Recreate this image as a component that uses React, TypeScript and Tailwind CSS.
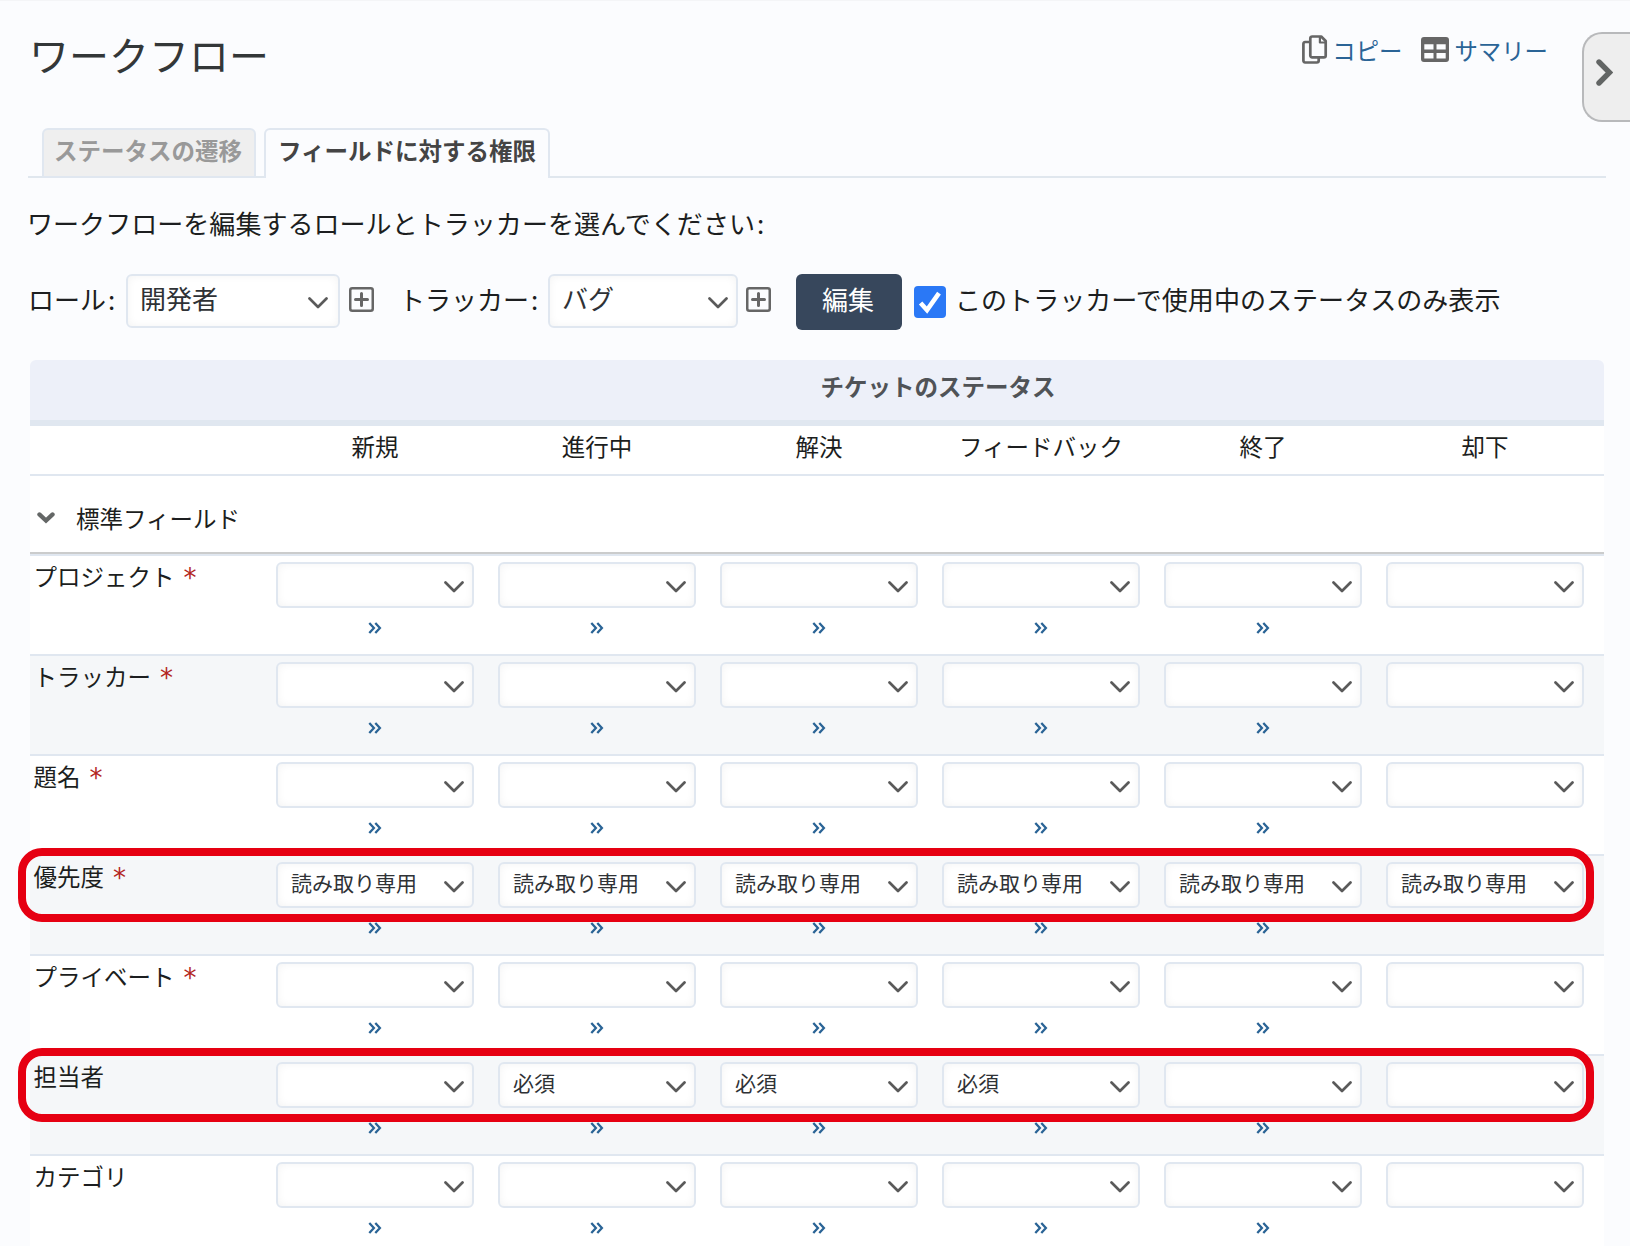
import React from "react";

const statuses = ["新規", "進行中", "解決", "フィードバック", "終了", "却下"];

const READ_ONLY = "読み取り専用";
const REQUIRED = "必須";

type Field = { name: string; required?: boolean; values?: string[]; highlight?: boolean };

const fields: Field[] = [
  { name: "プロジェクト", required: true },
  { name: "トラッカー", required: true },
  { name: "題名", required: true },
  { name: "優先度", required: true, values: Array(6).fill(READ_ONLY), highlight: true },
  { name: "プライベート", required: true },
  { name: "担当者", values: ["", REQUIRED, REQUIRED, REQUIRED, "", ""], highlight: true },
  { name: "カテゴリ" },
];

function Caret() {
  return (
    <svg width="20" height="12" viewBox="0 0 20 12" fill="none" className="mt-[3px] shrink-0">
      <path d="M1.5 1.5 10 10 18.5 1.5" stroke="#5a5a5a" strokeWidth="2.7" strokeLinecap="round" strokeLinejoin="round" />
    </svg>
  );
}

function PlusBox() {
  return (
    <svg width="25" height="25" viewBox="0 0 25 25" fill="none" stroke="#666" className="shrink-0">
      <rect x="1.25" y="1.25" width="22.5" height="22.5" rx="2" strokeWidth="2.5" />
      <path d="M12.5 6.5v12M6.5 12.5h12" strokeWidth="3" strokeLinecap="round" />
    </svg>
  );
}

function CopyIcon() {
  return (
    <svg width="26" height="30" viewBox="0 0 26 30" fill="none" stroke="#666" strokeWidth="2.7" strokeLinejoin="round" className="shrink-0">
      <path d="M8.2 7H3.2A1.9 1.9 0 0 0 1.4 8.9V25.6A1.9 1.9 0 0 0 3.2 27.5H14.8A1.9 1.9 0 0 0 16.7 25.6V23" />
      <path d="M10.2 1.5H19.2L23.7 6V20.4A1.9 1.9 0 0 1 21.8 22.3H10.2A1.9 1.9 0 0 1 8.3 20.4V3.4A1.9 1.9 0 0 1 10.2 1.5Z" />
      <path d="M17.9 2V7.5H23.6" strokeWidth="2.2" />
    </svg>
  );
}

function TableIcon() {
  return (
    <svg width="28" height="25" viewBox="0 0 28 25" className="shrink-0">
      <path
        fill="#666"
        fillRule="evenodd"
        d="M3 0H25A3 3 0 0 1 28 3V22A3 3 0 0 1 25 25H3A3 3 0 0 1 0 22V3A3 3 0 0 1 3 0ZM3.3 7.2V12.6H12.5V7.2ZM15.5 7.2V12.6H24.7V7.2ZM3.3 16V21.6H12.5V16ZM15.5 16V21.6H24.7V16Z"
      />
    </svg>
  );
}

function SelectBox({ value = "", className = "" }: { value?: string; className?: string }) {
  return (
    <div
      className={
        "flex items-center justify-between rounded-[6px] border-2 border-[#e0e7f0] bg-white text-[#2f3236] shadow-[inset_0_0_8px_rgba(0,0,0,0.05)] " +
        className
      }
    >
      <span className="-mt-1.5 whitespace-nowrap">{value}</span>
      <Caret />
    </div>
  );
}

function FieldRow({ field, index, last }: { field: Field; index: number; last: boolean }) {
  const shade = index % 2 === 1 ? "bg-[#f5f7f9]" : "bg-white";
  return (
    <div
      className={
        "relative grid h-[100px] shrink-0 grid-cols-[234px_repeat(6,222px)] " +
        shade +
        (last ? "" : " border-b-2 border-[#e0e7f0]")
      }
    >
      <div className="flex pl-[3.5px] pt-[3px] text-[23.5px] leading-[34px]">
        {field.name}
        {field.required && (
          <span className="ml-[9px] mt-0.5 font-['DejaVu_Sans',sans-serif] text-[26px] text-[#b3261e]">*</span>
        )}
      </div>
      {statuses.map((s, i) => (
        <div key={s} className="flex flex-col items-center pt-1.5">
          <SelectBox value={field.values?.[i]} className="h-[46px] w-[198px] pl-[13px] pr-2 text-[21px] leading-[30px]" />
          {i < 5 && (
            <svg width="14" height="12" viewBox="0 0 14 12" fill="none" stroke="#2a6496" strokeWidth="2.3" className="mt-[14px]">
              <path d="M1.3 1 5.9 6 1.3 11M7.3 1 11.9 6 7.3 11" />
            </svg>
          )}
        </div>
      ))}
      {field.highlight && (
        <div className="absolute left-[-12px] top-[-8px] z-10 h-[74px] w-[1576px] rounded-[24px] border-8 border-[#e60012]" />
      )}
    </div>
  );
}

export default function App() {
  return (
    <div className="flex h-[1246px] w-[1630px] flex-col overflow-hidden border-t border-[#f4f5f7] bg-[#fbfcfe] font-['Noto_Sans_CJK_JP',sans-serif] text-[#1c1e20]">
      <header className="flex h-[127px] shrink-0 justify-between pl-[29px]">
        <h1 className="mt-[24px] text-[40px] leading-[58px] text-[#333738]">ワークフロー</h1>
        <div className="flex items-start">
          <nav className="mr-[34px] mt-[31px] flex items-center text-[23.4px] leading-[36px] text-[#2a6496]">
            <CopyIcon />
            <a className="ml-1">コピー</a>
            <span className="-mt-0.5 ml-[19px] flex items-center">
              <TableIcon />
            </span>
            <a className="ml-[5px]">サマリー</a>
          </nav>
          <button className="mt-[31px] flex h-[90px] w-[48px] items-center rounded-l-[20px] border-2 border-r-0 border-[#b8b9bb] bg-[#eee] pl-3 pb-2.5">
            <svg width="17" height="27" viewBox="0 0 17 27" fill="none">
              <path d="M3 3 13.5 13.5 3 24" stroke="#626564" strokeWidth="5.4" strokeLinecap="round" strokeLinejoin="miter" />
            </svg>
          </button>
        </div>
      </header>

      <div className="ml-7 flex h-[50px] w-[1578px] shrink-0 text-[23.5px] font-bold leading-[34px]">
        <div className="w-[14px] border-b-2 border-[#e0e7ee]" />
        <div className="h-[50px] w-[214px] whitespace-nowrap rounded-t-[6px] border-2 border-[#e0e7f0] bg-[#efefef] pl-[10px] pt-[3px] text-[#999]">
          ステータスの遷移
        </div>
        <div className="w-2 border-b-2 border-[#e0e7ee]" />
        <div className="h-[50px] w-[286px] whitespace-nowrap rounded-t-[6px] border-2 border-b-0 border-[#e0e7f0] pl-[12px] pt-[3px] text-[#444]">
          フィールドに対する権限
        </div>
        <div className="flex-1 border-b-2 border-[#e0e7ee]" />
      </div>

      <p className="ml-[27px] mt-[26px] shrink-0 text-[26.05px] leading-[38px]">
        ワークフローを編集するロールとトラッカーを選んでください<span className="ml-0.5">:</span>
      </p>

      <div className="ml-7 mt-8 flex h-[56px] shrink-0 items-start whitespace-nowrap text-[26px] leading-[50px]">
        <span className="w-[98px]">
          ロール<span className="ml-0.5">:</span>
        </span>
        <SelectBox value="開発者" className="h-[54px] w-[214px] pl-3 pr-2.5 leading-[50px]" />
        <span className="ml-[9px] mt-[13px]">
          <PlusBox />
        </span>
        <span className="ml-[25px] w-[149px]">
          トラッカー<span className="ml-0.5">:</span>
        </span>
        <SelectBox value="バグ" className="h-[54px] w-[190px] pl-3 pr-2 leading-[50px]" />
        <span className="ml-2 mt-[13px]">
          <PlusBox />
        </span>
        <button className="ml-[25px] h-[56px] w-[106px] rounded-[6px] bg-[#37475c] pb-[7px] pr-0.5 leading-[49px] text-white">編集</button>
        <span className="ml-3 mt-3 flex h-8 w-8 items-center justify-center rounded-[4px] bg-[#2a78f6]">
          <svg width="24" height="24" viewBox="0 0 24 24" fill="none">
            <path d="M2.6 13 9 20 21 3.2" stroke="#fff" strokeWidth="4.6" />
          </svg>
        </span>
        <label className="ml-[9px] text-[26.05px]">このトラッカーで使用中のステータスのみ表示</label>
      </div>

      <section className="ml-[30px] mt-[30px] flex w-[1574px] shrink-0 flex-col">
        <div className="flex h-[66px] rounded-t-[6px] border-b-[6px] border-[#e0e7f0] bg-[#edf0f9]">
          <div className="w-[242px]" />
          <div className="flex-1 text-center text-[23.5px] font-bold leading-[53px] text-[#505357]">チケットのステータス</div>
        </div>
        <div className="grid h-[50px] grid-cols-[234px_repeat(6,222px)] border-b-2 border-[#e0e7f0] bg-white text-center text-[23.5px] leading-[40px]">
          <span />
          {statuses.map((s) => (
            <span key={s}>{s}</span>
          ))}
        </div>
        <div className="h-[80px] border-b-2 border-[#e0e7f0]">
          <div className="flex h-[78px] items-center border-b-2 border-[#cbcccc] bg-white pl-[7px] pt-[8px] text-[23.5px] leading-[34px]">
            <svg width="18" height="12" viewBox="0 0 18 12" fill="none" className="-mt-[1px]">
              <path d="M2.4 2.4 9 8.6 15.6 2.4" stroke="#646766" strokeWidth="4.2" strokeLinecap="round" />
            </svg>
            <span className="ml-[21px]">標準フィールド</span>
          </div>
        </div>
        {fields.map((f, i) => (
          <FieldRow key={f.name} field={f} index={i} last={i === fields.length - 1} />
        ))}
      </section>
    </div>
  );
}
